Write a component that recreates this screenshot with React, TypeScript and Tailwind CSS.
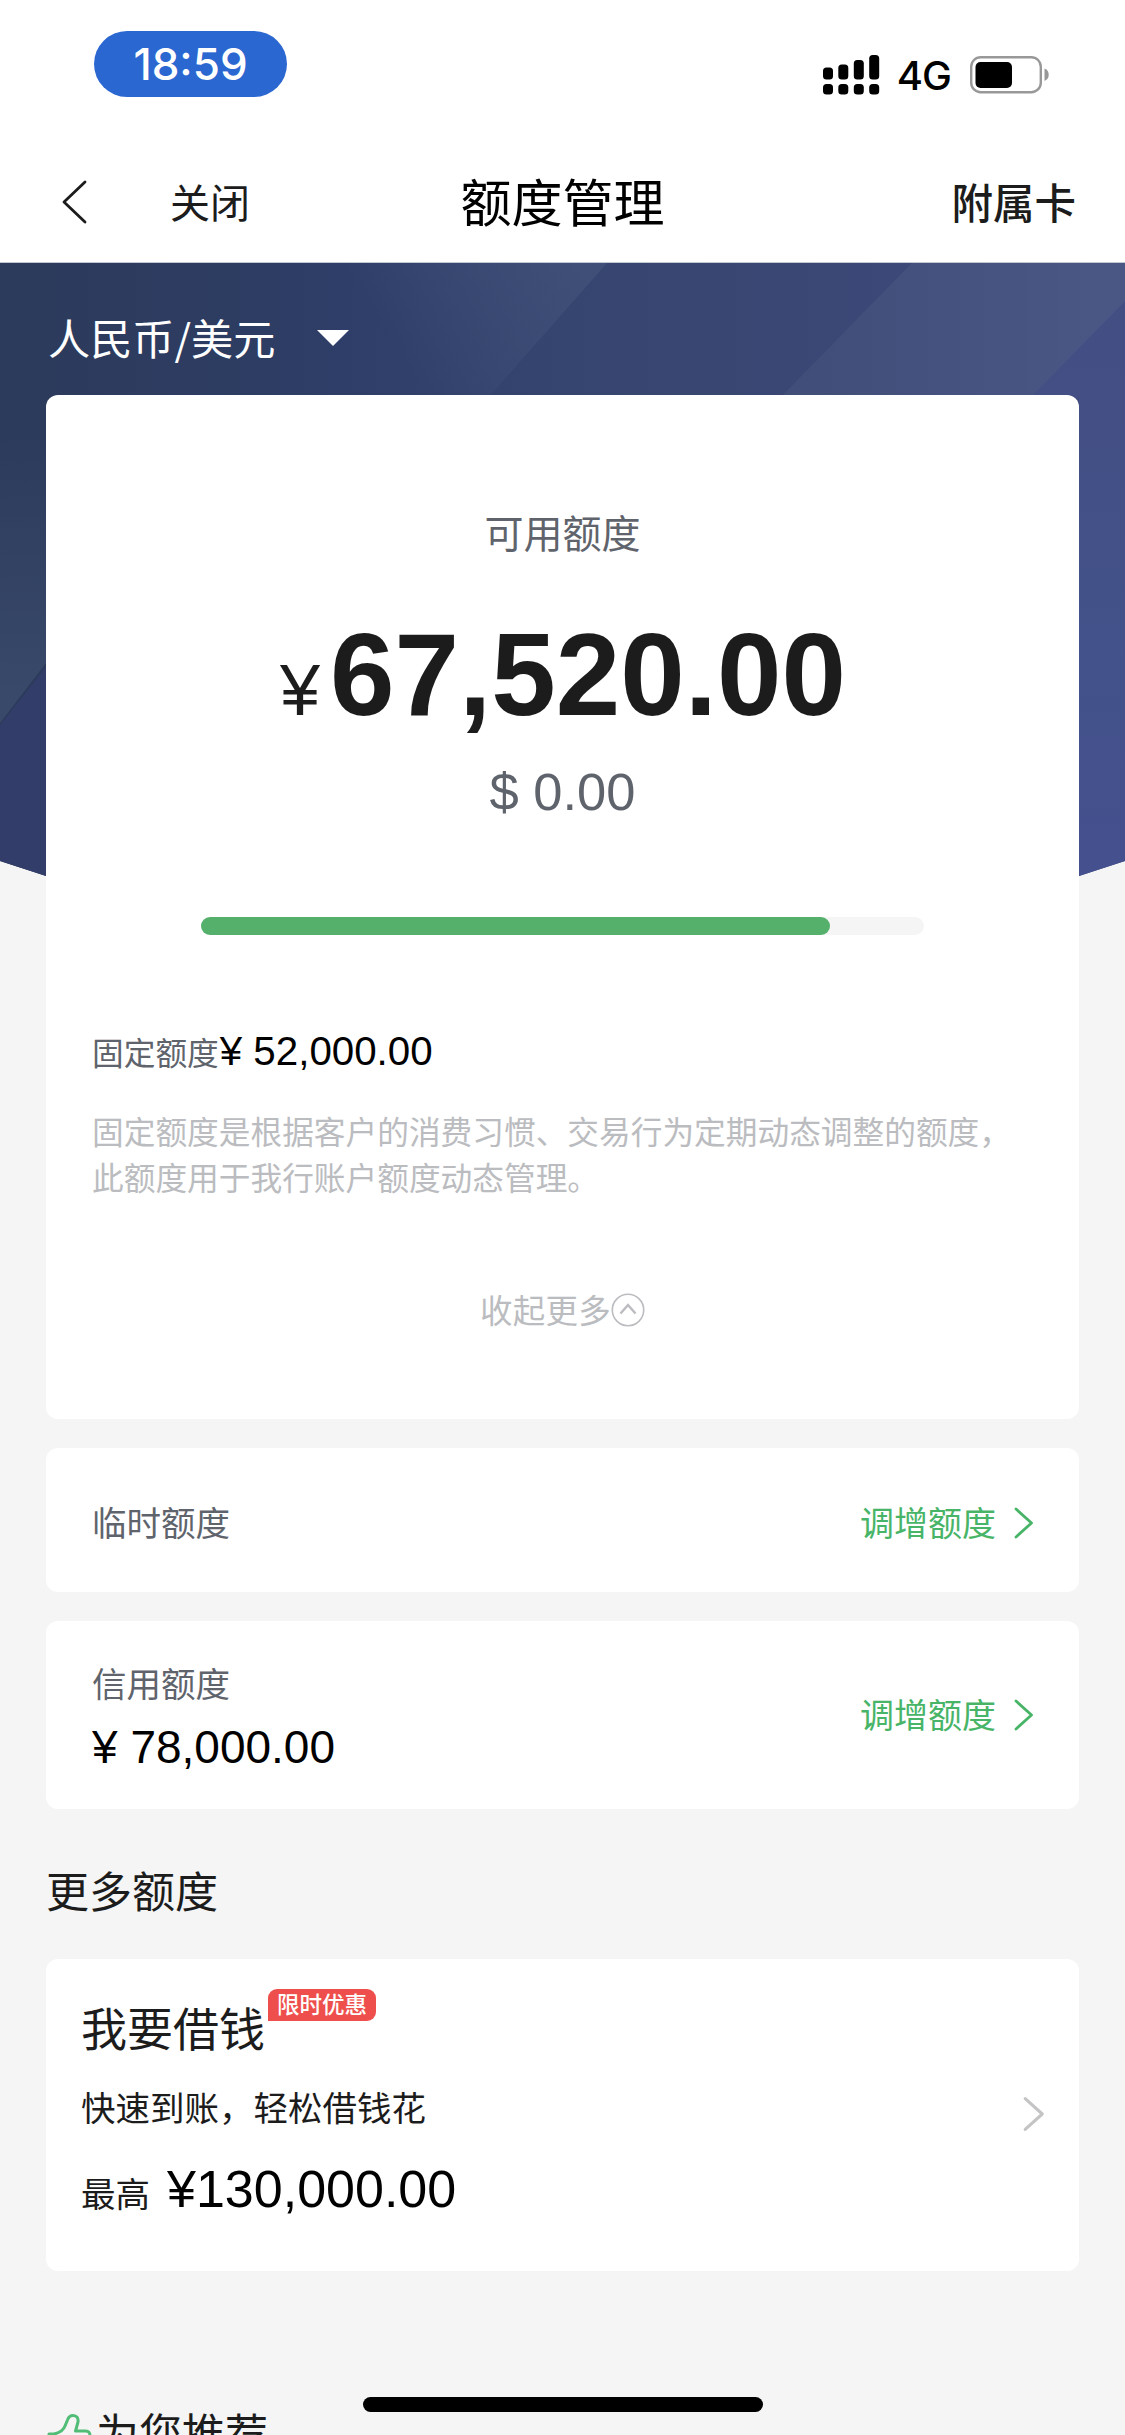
import { useState } from "react";
import clsx from "clsx";

const TOTAL_LIMIT = 78000;
const AVAILABLE = 67520;

function formatAmount(value: number) {
  return value.toLocaleString("en-US", {
    minimumFractionDigits: 2,
    maximumFractionDigits: 2,
  });
}

function SignalIcon() {
  return (
    <svg width="57" height="40" viewBox="0 0 57 40" fill="#000">
      <rect x="0" y="12.5" width="10" height="12" rx="3.5" />
      <rect x="15.3" y="9.5" width="10" height="15" rx="3.5" />
      <rect x="30.8" y="5" width="10" height="19.5" rx="3.5" />
      <rect x="46.2" y="0" width="10" height="24.5" rx="3.5" />
      <rect x="0" y="29" width="10" height="10.5" rx="3.5" />
      <rect x="15.3" y="29" width="10" height="10.5" rx="3.5" />
      <rect x="30.8" y="29" width="10" height="10.5" rx="3.5" />
      <rect x="46.2" y="29" width="10" height="10.5" rx="3.5" />
    </svg>
  );
}

function BatteryIcon() {
  return (
    <svg width="80" height="38" viewBox="0 0 80 38" fill="none">
      <rect x="1.2" y="1.2" width="69.6" height="35" rx="9.5" stroke="#989898" strokeWidth="2.4" />
      <rect x="5.5" y="6" width="36.5" height="26" rx="5" fill="#000" />
      <path d="M74.5 12.5c3 1.2 4.2 3.4 4.2 6.2s-1.2 5-4.2 6.2z" fill="#989898" />
    </svg>
  );
}

function Chevron({ className }: { className?: string }) {
  return (
    <svg className={className} viewBox="0 0 20 32" fill="none" stroke="currentColor">
      <path d="M2 2l15.5 14L2 30" strokeWidth="2.8" strokeLinecap="round" strokeLinejoin="round" />
    </svg>
  );
}

function HeroBackground() {
  return (
    <svg
      className="absolute left-0 top-0"
      width="1125"
      height="613"
      viewBox="0 0 1125 613"
      fill="none"
    >
      <defs>
        <linearGradient id="base" x1="0" y1="0" x2="1125" y2="0" gradientUnits="userSpaceOnUse">
          <stop offset="0" stopColor="#2c3b5b" />
          <stop offset="0.2" stopColor="#2d3c61" />
          <stop offset="0.3" stopColor="#2f3e68" />
          <stop offset="0.5" stopColor="#36456f" />
          <stop offset="0.7" stopColor="#3a4774" />
          <stop offset="1" stopColor="#404c80" />
        </linearGradient>
        <linearGradient id="beamA" x1="420" y1="120" x2="590" y2="10" gradientUnits="userSpaceOnUse">
          <stop offset="0" stopColor="#404f78" stopOpacity="0" />
          <stop offset="1" stopColor="#404f78" />
        </linearGradient>
        <linearGradient id="beamB" x1="820" y1="0" x2="1100" y2="0" gradientUnits="userSpaceOnUse">
          <stop offset="0" stopColor="#414e7a" />
          <stop offset="1" stopColor="#4a5785" />
        </linearGradient>
        <linearGradient id="left" x1="0" y1="0" x2="0" y2="430" gradientUnits="userSpaceOnUse">
          <stop offset="0.4" stopColor="#39496a" stopOpacity="0" />
          <stop offset="1" stopColor="#39496a" />
        </linearGradient>
        <linearGradient id="right" x1="0" y1="40" x2="0" y2="613" gradientUnits="userSpaceOnUse">
          <stop offset="0" stopColor="#434e83" />
          <stop offset="0.6" stopColor="#43528a" />
          <stop offset="1" stopColor="#45508e" />
        </linearGradient>
      </defs>
      <path d="M0 0H1125V598L1079 613H46L0 598Z" fill="url(#base)" />
      <path d="M300 0H607L488 135H300Z" fill="url(#beamA)" />
      <path d="M912 0H1125V135H780Z" fill="url(#beamB)" />
      <path d="M1125 38V598L1079 613V135H1030Z" fill="url(#right)" />
      <path d="M0 0H46V400L0 460Z" fill="url(#left)" />
      <path d="M46 404V613L0 598V462Z" fill="#333d69" />
    </svg>
  );
}

interface LimitRowProps {
  label: string;
  amount?: number;
  className: string;
}

function LimitRow({ label, amount, className }: LimitRowProps) {
  const hasAmount = amount !== undefined;

  return (
    <div className={clsx("mx-[46px] flex items-center justify-between rounded-xl bg-white pl-[46px] pr-[45px]", className)}>
      <div className="pt-[2px]">
        <p className="text-[34.5px] leading-[40px] text-[#5f646c]">{label}</p>
        {hasAmount && (
          <p className="mt-[22px] font-['Liberation_Sans',sans-serif] text-[46px] leading-[46px] text-black">
            ¥ {formatAmount(amount)}
          </p>
        )}
      </div>
      <button className={clsx("flex items-center text-[#48b468]", !hasAmount && "pt-[6px]")}>
        <span className="pb-[3px] text-[34px] leading-[40px]">调增额度</span>
        <Chevron className="ml-[18px] h-[32px] w-[20px]" />
      </button>
    </div>
  );
}

export default function App() {
  const [expanded, setExpanded] = useState(true);
  const percent = Math.ceil((AVAILABLE / TOTAL_LIMIT) * 100);

  return (
    <div
      lang="zh-CN"
      className="relative h-[2435px] w-[1125px] overflow-hidden bg-[#f5f5f5] font-['Noto_Sans_CJK_SC',sans-serif]"
    >
      {/* Status bar */}
      <div className="flex h-[143px] items-start bg-white pl-[94px] pr-[75px]">
        <div className="mt-[31px] flex h-[66px] w-[193px] items-center justify-center rounded-full bg-[#2b67d1] font-['Inter',sans-serif] text-[44px] font-medium leading-none text-white">
          18:59
        </div>
        <div className="ml-auto mt-[55px] flex items-start">
          <SignalIcon />
          <span className="ml-[17px] mt-[1px] font-['Inter',sans-serif] text-[40px] font-medium leading-[40px] tracking-[-1px] text-black">
            4G
          </span>
          <div className="ml-[19px] mt-[1px]">
            <BatteryIcon />
          </div>
        </div>
      </div>

      {/* Nav bar */}
      <div className="grid h-[120px] grid-cols-3 items-center border-b border-[#c3c7d2] bg-white px-[49px] pb-[2px]">
        <div className="flex items-center pl-[12px]">
          <svg width="26" height="44" viewBox="0 0 26 44" fill="none" stroke="#1c1c1c">
            <path d="M24 2L3 22l21 20" strokeWidth="2.8" strokeLinecap="round" strokeLinejoin="round" />
          </svg>
          <span className="ml-[83px] pb-[2px] text-[40px] leading-[44px] text-[#1c1c1c]">关闭</span>
        </div>
        <h1 className="pb-[4px] text-center text-[51px] leading-[52px] text-black">额度管理</h1>
        <span className="pb-[2px] text-right text-[41.5px] font-medium leading-[44px] text-[#1c1c1c]">附属卡</span>
      </div>

      {/* Limit overview */}
      <div className="relative">
        <HeroBackground />
        <div className="relative">
          <button className="flex h-[132px] items-center pb-[4px] pl-[48px] pt-[21px] text-white">
            <span className="pb-[1px] text-[42.2px] leading-[44px]">人民币/美元</span>
            <svg className="ml-[42px]" width="32" height="16" viewBox="0 0 32 16" fill="currentColor">
              <path d="M0 0h32L16 16z" />
            </svg>
          </button>

          <div className="mx-[46px] h-[1024px] rounded-xl bg-white px-[46px] pt-[116px]">
            <p className="text-center text-[39px] leading-[40px] text-[#5f646c]">可用额度</p>
            <div className="mt-[66px] flex items-baseline justify-center gap-[10px] pl-[1px] font-['Liberation_Sans',sans-serif] text-[#1c1c1c]">
              <span className="text-[72px] leading-none">¥</span>
              <span className="text-[116px] font-bold leading-[116px]">{formatAmount(AVAILABLE)}</span>
            </div>
            <p className="mt-[33px] text-center font-['Liberation_Sans',sans-serif] text-[52.5px] leading-[52px] text-[#5f646c]">
              $ 0.00
            </p>
            <div className="mx-auto mt-[99px] h-[18px] w-[723px] rounded-full bg-[#f5f5f5]">
              <div className="h-full rounded-full bg-[#55b06c]" style={{ width: `${percent}%` }} />
            </div>
            <div className="mt-[92px] flex h-[50px] items-baseline">
              <span className="text-[31.7px] leading-[40px] text-[#5f646c]">固定额度</span>
              <span className="ml-[1px] font-['Liberation_Sans',sans-serif] text-[40.3px] leading-[50px] text-black">
                ¥ {formatAmount(52000)}
              </span>
            </div>
            {expanded && (
              <p className="mt-[30px] whitespace-nowrap text-[31.7px] leading-[46px] text-[#bbbcc0]">
                固定额度是根据客户的消费习惯、交易行为定期动态调整的额度，
                <br />
                此额度用于我行账户额度动态管理。
              </p>
            )}
            <button
              onClick={() => setExpanded(!expanded)}
              className="mx-auto mt-[90px] flex items-center text-[#bbbcc0]"
            >
              <span className="text-[32.5px] leading-[40px] tracking-[0.3px]">收起更多</span>
              <svg className="mt-[2px]" width="34" height="34" viewBox="0 0 34 34" fill="none" stroke="currentColor">
                <circle cx="17" cy="17" r="15.7" strokeWidth="1.6" />
                <path d="M9.5 20.5L17 12l7.5 8.5" strokeWidth="2.4" />
              </svg>
            </button>
          </div>
        </div>
      </div>

      <LimitRow label="临时额度" className="mt-[29px] h-[144px]" />
      <LimitRow label="信用额度" amount={TOTAL_LIMIT} className="mt-[29px] h-[188px]" />

      <h2 className="mt-[58px] pl-[46px] text-[43px] leading-[44px] text-[#1c1c1c]">更多额度</h2>

      {/* Loan card */}
      <div className="mx-[46px] mt-[48px] flex h-[312px] items-center justify-between rounded-xl bg-white pb-[2px] pl-[35px] pr-[34px]">
        <div className="self-start pt-[30px] text-[#1c1c1c]">
          <div className="flex items-start">
            <span className="mt-[11px] text-[46px] leading-[52px]">我要借钱</span>
            <span className="ml-[3px] flex h-[32px] w-[108px] items-center justify-center rounded-[9px] rounded-bl-none bg-[#ee4f4c] pb-[3px] text-[22.5px] font-medium leading-none text-white">
              限时优惠
            </span>
          </div>
          <p className="mt-[34px] text-[34.5px] leading-[40px]">快速到账，轻松借钱花</p>
          <div className="mt-[37px] flex items-baseline">
            <span className="text-[34.5px] leading-[40px]">最高</span>
            <span className="ml-[17px] font-['Liberation_Sans',sans-serif] text-[52px] leading-[52px] text-black">
              ¥{formatAmount(130000)}
            </span>
          </div>
        </div>
        <Chevron className="h-[36px] w-[22px] text-[#c4c4c6]" />
      </div>

      {/* Recommendations */}
      <div className="mt-[138px] flex items-start pl-[46px]">
        <svg className="mt-[5px]" width="50" height="50" viewBox="0 0 50 50" fill="none" stroke="#52bd77">
          <path
            d="M3 20h5c5-1 9-3 11-8l2.500-6c1-3 3-4.500 5.500-4.500 4 0 5.500 3 5 6.500l-2.500 9h10c4 0 5 3 4 6l-5 18H3z"
            strokeWidth="3"
            strokeLinejoin="round"
          />
        </svg>
        <span className="text-[43px] leading-[44px] text-[#1c1c1c]">为您推荐</span>
      </div>

      {/* Home indicator */}
      <div className="absolute left-[363px] top-[2397px] h-[15px] w-[400px] rounded-full bg-black" />
    </div>
  );
}
